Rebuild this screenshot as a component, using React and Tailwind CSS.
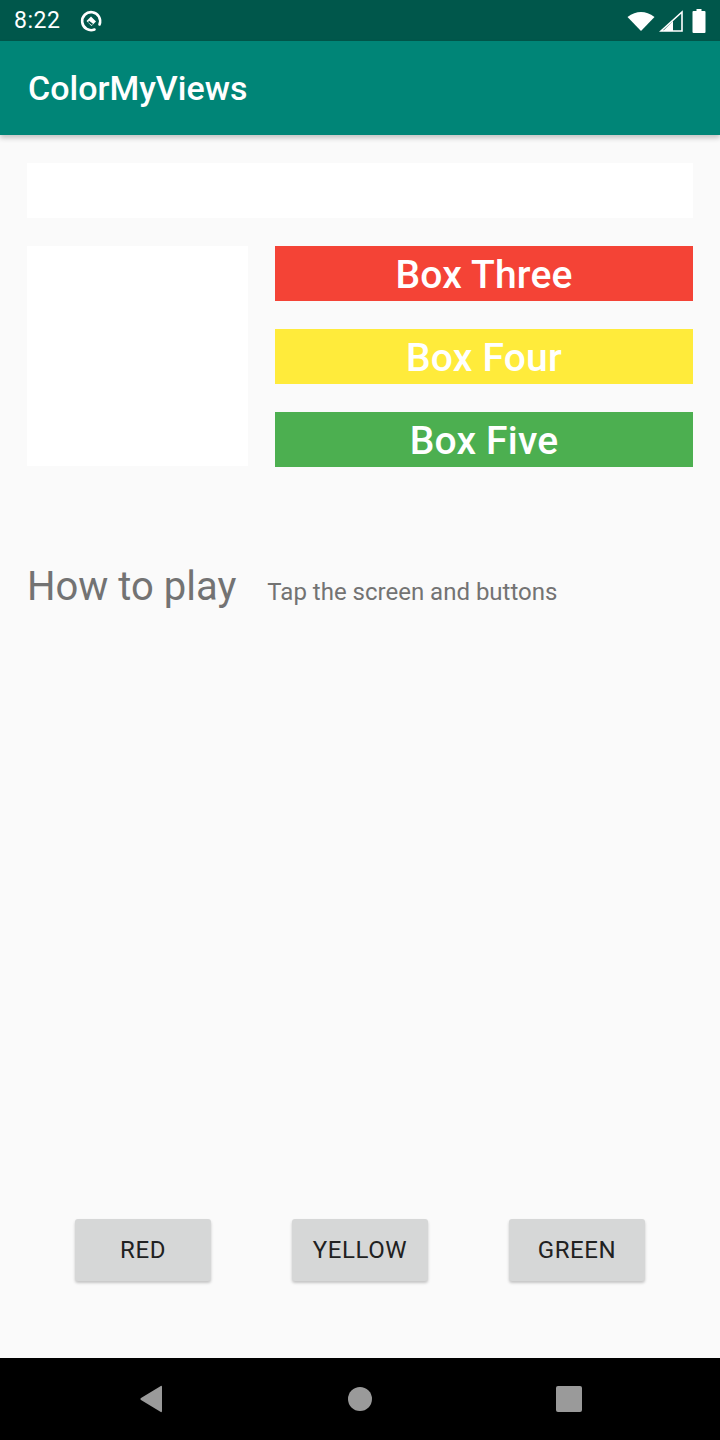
import React from 'react'

const StatusBar = () => (
  <div className="h-[41px] bg-[#00574B] flex items-center justify-between pl-[14px] pr-[14px] text-white">
    <div className="flex items-center">
      <span className="text-[23px] leading-none font-['Roboto'] tracking-[0.5px]">8:22</span>
      {/* data saver style ring */}
      <svg className="ml-[19px]" width="24" height="24" viewBox="0 0 24 24">
        <path d="M20.5 15.5 A9 9 0 1 0 15.5 20.5" fill="none" stroke="white" strokeWidth="2.6" strokeLinecap="round" />
        <path d="M7.5 12 L12 7.5 L17 12.5 L12.5 17 Z" fill="white" />
        <path d="M9.5 12.5 L13.5 15.5" stroke="#00574B" strokeWidth="1.6" />
      </svg>
    </div>
    <div className="flex items-center gap-[4px]">
      <svg width="28" height="22" viewBox="0 0 28 22">
        <path d="M0.5 7 Q14 -3 27.5 7 L14 21 Z" fill="white" />
      </svg>
      <svg width="24" height="22" viewBox="0 0 24 22">
        <path d="M23 2 L23 21 L2 21 Z" fill="none" stroke="white" strokeWidth="1.6" />
        <path d="M14 11 L14 21 L4 21 Z" fill="white" />
      </svg>
      <svg className="ml-[5px]" width="14" height="24" viewBox="0 0 14 24">
        <rect x="4.5" y="0" width="5" height="3" fill="white" />
        <rect x="0.5" y="2" width="13" height="22" rx="1" fill="white" />
      </svg>
    </div>
  </div>
)

const ColorBox = ({ bg, label }) => (
  <div className={`h-[55px] ${bg} flex items-center justify-center pt-[3px]`}>
    <span className="text-white text-[39px] font-medium tracking-[0.2px] leading-none font-['Roboto']">{label}</span>
  </div>
)

const ActionButton = ({ label }) => (
  <button className="w-[136px] h-[62px] bg-[#D6D7D7] rounded-[3px] shadow-[0_2px_3px_rgba(0,0,0,0.22)] text-[#212121] text-[24px] font-normal tracking-[0.6px] font-['Roboto'] leading-none">
    {label}
  </button>
)

export default function App() {
  return (
    <div className="w-[720px] h-[1440px] bg-[#FAFAFA] flex flex-col font-['Roboto',sans-serif]">
      <StatusBar />
      <div className="h-[94px] bg-[#008577] flex items-center pl-[28px] shadow-[0_3px_5px_rgba(0,0,0,0.22)] z-10">
        <span className="text-white text-[34px] font-medium font-['Roboto'] leading-none">ColorMyViews</span>
      </div>

      <div className="flex-1 flex flex-col px-[27px] pt-[28px]">
        <div className="h-[55px] bg-white" />

        <div className="flex gap-[27px] mt-[28px]">
          <div className="w-[221px] h-[220px] bg-white" />
          <div className="flex-1 flex flex-col gap-[28px]">
            <ColorBox bg="bg-[#F44336]" label="Box Three" />
            <ColorBox bg="bg-[#FFEB3B]" label="Box Four" />
            <ColorBox bg="bg-[#4CAF50]" label="Box Five" />
          </div>
        </div>

        <div className="flex items-baseline mt-[100px]">
          <span className="text-[40px] leading-none text-[#737373] font-['Roboto']">How to play</span>
          <span className="ml-[31px] text-[24px] leading-none text-[#737373] font-['Roboto']">Tap the screen and buttons</span>
        </div>

        <div className="flex-1" />

        <div className="flex justify-between px-[48px] mb-[77px]">
          <ActionButton label="RED" />
          <ActionButton label="YELLOW" />
          <ActionButton label="GREEN" />
        </div>
      </div>

      <div className="h-[82px] bg-black flex items-center justify-center gap-[184px]">
        <svg width="26" height="28" viewBox="0 0 26 28">
          <path d="M24 2 L24 26 Q24 28 22 26.5 L3 15 Q1.5 14 3 13 L22 1.5 Q24 0 24 2 Z" fill="#9A9A9A" />
        </svg>
        <div className="w-[24px] h-[24px] rounded-full bg-[#9A9A9A]" />
        <div className="w-[26px] h-[26px] rounded-[2px] bg-[#9A9A9A]" />
      </div>
    </div>
  )
}
